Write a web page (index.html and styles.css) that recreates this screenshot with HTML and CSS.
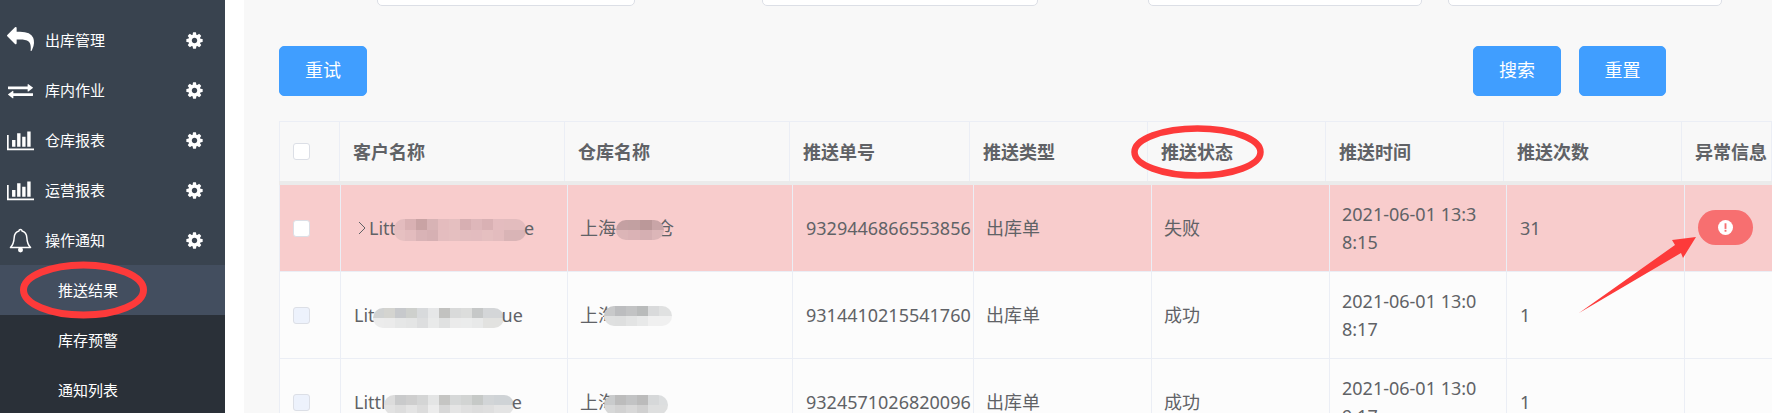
FILE: index.html
```html
<!DOCTYPE html>
<html lang="zh-CN">
<head>
<meta charset="utf-8">
<title>推送结果</title>
<link rel="stylesheet" href="styles.css">
</head>
<body>
<div class="app">
  <aside class="sidebar">
    <nav class="menu">
      <a class="item">
        <span class="ico"><svg class="i-reply" viewBox="0 0 1792 1792"><path d="M1792 1120q0 166-127 451-3 7-10.5 24t-13.5 30-13 22q-12 17-28 17-15 0-23.5-10t-8.5-25q0-9 2.5-26.5t2.5-23.5q5-68 5-123 0-101-17.5-181t-48.5-138.5-80-101-105.5-69.5-133-42.5-154-21.5-175.5-6h-224v256q0 26-19 45t-45 19-45-19l-512-512q-19-19-19-45t19-45l512-512q19-19 45-19t45 19 19 45v256h224q713 0 875 403 53 134 53 333z"/></svg></span>
        <span class="label">出库管理</span>
        <svg class="gear" viewBox="0 0 1792 1792"><use href="#cog"/></svg>
      </a>
      <a class="item">
        <span class="ico"><svg class="i-swap" viewBox="0 0 1792 1792" preserveAspectRatio="none"><path d="M1792 1184v192q0 13-9.5 22.5t-22.5 9.5h-1376v192q0 13-9.5 22.5t-22.5 9.5q-12 0-24-10l-319-320q-9-9-9-22 0-14 9-23l320-320q9-9 23-9 13 0 22.5 9.5t9.5 22.5v192h1376q13 0 22.5 9.5t9.5 22.5zm0-544q0 14-9 23l-320 320q-9 9-23 9-13 0-22.5-9.5t-9.5-22.5v-192h-1376q-13 0-22.5-9.5t-9.5-22.5v-192q0-13 9.5-22.5t22.5-9.5h1376v-192q0-14 9-23t23-9q12 0 24 10l319 319q9 9 9 23z"/></svg></span>
        <span class="label">库内作业</span>
        <svg class="gear" viewBox="0 0 1792 1792"><use href="#cog"/></svg>
      </a>
      <a class="item">
        <span class="ico"><svg class="i-bars" viewBox="0 0 2048 1792"><use href="#bars"/></svg></span>
        <span class="label">仓库报表</span>
        <svg class="gear" viewBox="0 0 1792 1792"><use href="#cog"/></svg>
      </a>
      <a class="item">
        <span class="ico"><svg class="i-bars" viewBox="0 0 2048 1792"><use href="#bars"/></svg></span>
        <span class="label">运营报表</span>
        <svg class="gear" viewBox="0 0 1792 1792"><use href="#cog"/></svg>
      </a>
      <a class="item">
        <span class="ico"><svg class="i-bell" viewBox="0 0 24 26"><path class="bell-line" d="M12 1.5c-1 0-1.6.7-1.6 1.6C7 4 5.6 6.8 5.4 10c-.2 4-.6 7-3.900 10.400h21C19.200 17 18.800 14 18.600 10c-.2-3.200-1.600-6-5-6.900 0-.9-.6-1.600-1.600-1.600z"/><circle class="bell-dot" cx="12" cy="23" r="2.600"/></svg></span>
        <span class="label">操作通知</span>
        <svg class="gear" viewBox="0 0 1792 1792"><use href="#cog"/></svg>
      </a>
      <div class="sub">
        <a class="sub-item active">推送结果</a>
        <a class="sub-item">库存预警</a>
        <a class="sub-item">通知列表</a>
      </div>
    </nav>
  </aside>

  <main class="content">
    <div class="filters">
      <div class="field f1"></div>
      <div class="field f2"></div>
      <div class="field f3"></div>
      <div class="field f4"></div>
    </div>

    <div class="toolbar">
      <button class="btn btn-retry">重试</button>
      <div class="toolbar-right">
        <button class="btn btn-search">搜索</button>
        <button class="btn btn-reset">重置</button>
      </div>
    </div>

    <div class="table">
      <div class="thead">
        <div class="cell"><span class="check"></span></div>
        <div class="cell">客户名称</div>
        <div class="cell">仓库名称</div>
        <div class="cell">推送单号</div>
        <div class="cell">推送类型</div>
        <div class="cell">推送状态</div>
        <div class="cell">推送时间</div>
        <div class="cell">推送次数</div>
        <div class="cell">异常信息</div>
      </div>
      <div class="band"></div>

      <div class="row row-fail">
        <div class="cell"><span class="check"></span></div>
        <div class="cell">
          <svg class="chevron" viewBox="0 0 8 14"><path d="M1 1l6 6-6 6"/></svg>
          <span class="nowrap">Litt<span class="mosaic m1"></span>e</span>
        </div>
        <div class="cell cell-cjk"><span class="nowrap">上海<span class="mosaic m2"></span>仓</span></div>
        <div class="cell"><span class="nowrap">9329446866553856</span></div>
        <div class="cell cell-cjk">出库单</div>
        <div class="cell cell-cjk">失败</div>
        <div class="cell cell-date"><span>2021-06-01 13:38:15</span></div>
        <div class="cell">31</div>
        <div class="cell">
          <button class="alert-pill">
            <svg class="alert-ico" viewBox="0 0 16 16"><circle class="alert-disc" cx="8" cy="8" r="8"/><rect class="alert-mark" x="7" y="3.500" width="2" height="6"/><rect class="alert-mark" x="7" y="10.500" width="2" height="2"/></svg>
          </button>
        </div>
      </div>

      <div class="row">
        <div class="cell"><span class="check check-off"></span></div>
        <div class="cell"><span class="nowrap">Lit<span class="mosaic m3"></span>ue</span></div>
        <div class="cell cell-cjk"><span class="nowrap">上<span class="partial">海</span><span class="mosaic m4"></span></span></div>
        <div class="cell"><span class="nowrap">9314410215541760</span></div>
        <div class="cell cell-cjk">出库单</div>
        <div class="cell cell-cjk">成功</div>
        <div class="cell cell-date"><span>2021-06-01 13:08:17</span></div>
        <div class="cell">1</div>
        <div class="cell"></div>
      </div>

      <div class="row">
        <div class="cell"><span class="check check-off"></span></div>
        <div class="cell"><span class="nowrap">Littl<span class="mosaic m5"></span>e</span></div>
        <div class="cell cell-cjk"><span class="nowrap">上<span class="partial">海</span><span class="mosaic m6"></span></span></div>
        <div class="cell"><span class="nowrap">9324571026820096</span></div>
        <div class="cell cell-cjk">出库单</div>
        <div class="cell cell-cjk">成功</div>
        <div class="cell cell-date"><span>2021-06-01 13:09:17</span></div>
        <div class="cell">1</div>
        <div class="cell"></div>
      </div>
    </div>
  </main>

  <svg class="marks" viewBox="0 0 1772 413">
    <defs>
      <path id="cog" d="M1152 896q0-106-75-181t-181-75-181 75-75 181 75 181 181 75 181-75 75-181zm512-109v222q0 12-8 23t-20 13l-185 28q-19 54-39 91 35 50 107 138 10 12 10 25t-9 23q-27 37-99 108t-94 71q-12 0-26-9l-138-108q-44 23-91 38-16 136-29 186-7 28-36 28h-222q-14 0-24.500-8.500t-11.500-21.500l-28-184q-49-16-90-37l-141 107q-10 9-25 9-14 0-25-11-126-114-165-168-7-10-7-23 0-12 8-23 15-21 51-66.500t54-70.500q-27-50-41-99l-183-27q-13-2-21-12.500t-8-23.500v-222q0-12 8-23t19-13l186-28q14-46 39-92-40-57-107-138-10-12-10-24 0-10 9-23 26-36 98.500-107.500t94.500-71.500q13 0 26 10l138 107q44-23 91-38 16-136 29-186 7-28 36-28h222q14 0 24.500 8.500t11.500 21.500l28 184q49 16 90 37l142-107q9-9 24-9 13 0 25 10 129 119 165 170 7 8 7 22 0 12-8 23-15 21-51 66.500t-54 70.500q26 50 41 98l183 28q13 2 21 12.500t8 23.500z"/>
      <path id="bars" d="M640 896v512h-256v-512h256zm384-512v1024h-256v-1024h256zm1024 1152v128h-2048v-1152h128v1024h1920zm-640-896v768h-256v-768h256zm384-384v1152h-256v-1152h256z"/>
    </defs>
    <ellipse class="ring" cx="83.500" cy="290" rx="60" ry="25"/>
    <ellipse class="ring ring-thin" cx="1197.500" cy="152" rx="63" ry="23.500"/>
    <polygon class="arrow" points="1579,313 1681,253 1683,258 1696,237 1672,240 1675,245"/>
  </svg>
</div>
</body>
</html>
```

FILE: styles.css
```css
html, body {
  margin: 0;
  height: 413px;
  overflow: hidden;
  background: #fff;
}

body {
  font-family: "Noto Sans", "Noto Sans CJK SC", sans-serif;
  color: #606266;
}

.app {
  position: relative;
  display: flex;
  height: 413px;
  overflow: hidden;
}

/* Sidebar */
.sidebar {
  flex: 0 0 225px;
  background: #39434f;
  color: #fff;
  font-size: 15px;
  overflow: hidden;
}

.menu {
  padding-top: 15px;
}

.item {
  display: flex;
  align-items: center;
  height: 50px;
  padding-left: 7px;
}

.ico {
  display: flex;
  flex: 0 0 38px;
  align-items: center;
  justify-content: flex-start;
}

.ico svg {
  fill: #fff;
}

.i-reply {
  width: 27px;
  height: 27px;
  margin-top: -1px;
}

.i-swap {
  width: 25px;
  height: 19px;
  margin-left: 1px;
}

.i-bars {
  width: 27px;
  height: 24px;
}

.i-bell {
  width: 23px;
  height: 25px;
  margin-left: 2px;
}

.ico .bell-line {
  fill: none;
  stroke: #fff;
  stroke-width: 1.5;
  stroke-linejoin: round;
}

.ico .bell-dot {
  fill: #fff;
}

.label {
  flex: 0 0 140px;
  padding-bottom: 2px;
  white-space: nowrap;
  font-family: "Noto Sans CJK SC", sans-serif;
}

.gear {
  width: 19px;
  height: 19px;
  fill: #fff;
}

.sub {
  background: #2a3038;
}

.sub-item {
  display: flex;
  align-items: center;
  box-sizing: border-box;
  height: 50px;
  padding: 0 0 2px 58px;
  font-family: "Noto Sans CJK SC", sans-serif;
}

.sub-item.active {
  background: #434e5f;
}

/* Main */
.content {
  flex: 1;
  min-width: 0;
  margin-left: 19px;
  padding-left: 35px;
  background: #f8f8f8;
  overflow: hidden;
}

.filters {
  display: flex;
  align-items: flex-end;
  height: 6px;
  overflow: hidden;
}

.field {
  flex: none;
  height: 40px;
  box-sizing: border-box;
  border: 1px solid #dcdfe6;
  border-radius: 5px;
  background: #fff;
}

.f1 { width: 258px; margin-left: 98px; }
.f2 { width: 276px; margin-left: 127px; }
.f3 { width: 274px; margin-left: 110px; }
.f4 { width: 274px; margin-left: 26px; }

.toolbar {
  display: flex;
  justify-content: space-between;
  margin: 40px 106px 25px 0;
}

.toolbar-right {
  display: flex;
  gap: 18px;
}

.btn {
  height: 50px;
  width: 88px;
  padding: 0 0 4px;
  border: 1px solid #409eff;
  border-radius: 5px;
  background: #409eff;
  color: #fff;
  font: 18px "Noto Sans CJK SC", sans-serif;
}

.btn-reset {
  width: 87px;
}

/* Table */
.table {
  width: 1493px;
  font-size: 18px;
}

.thead,
.row {
  display: grid;
  border-left: 1px solid #ebeef5;
}

.thead {
  grid-template-columns: 60px 225px 225px 180px 178px 178px 178px 178px 90px;
  height: 60px;
  box-sizing: border-box;
  border-top: 1px solid #ebeef5;
  font-weight: 700;
}

.band {
  height: 4px;
  background: #ebebeb;
}

.row {
  grid-template-columns: 61px 227px 225px 181px 178px 178px 177px 178px 88px;
  height: 87px;
  box-sizing: border-box;
  border-bottom: 1px solid #ebeef5;
  background: #fcfcfc;
}

.row-fail {
  background: #f8cccc;
}

.cell {
  display: flex;
  align-items: center;
  box-sizing: border-box;
  min-width: 0;
  padding: 0 13px;
  border-right: 1px solid #ebeef5;
  line-height: 28px;
  white-space: nowrap;
}

.cell-cjk {
  padding-left: 12px;
}

.cell-date {
  padding: 0 20px 0 12px;
  white-space: normal;
  word-break: break-all;
}

.nowrap {
  white-space: nowrap;
}

.check {
  flex: none;
  width: 17px;
  height: 17px;
  box-sizing: border-box;
  border: 1px solid #dcdfe6;
  border-radius: 3px;
  background: #fff;
}

.check-off {
  background: #edf2fc;
}

.chevron {
  flex: none;
  width: 8px;
  height: 14px;
  margin: 0 3px 0 4px;
  fill: none;
  stroke: #606266;
  stroke-width: 1;
}

.partial {
  margin-right: -12px;
}

.mosaic {
  display: inline-block;
  vertical-align: -6px;
  height: 22px;
  border-radius: 10px;
  background-repeat: no-repeat;
  background-size: 100% 50%;
  background-position: top, bottom;
}

.m1 {
  width: 132px;
  margin: 0 -2px;
  background-image:
    linear-gradient(90deg, #e3bcbe 0 11px, #d9b1b3 11px 22px, #c9a3a4 22px 33px, #d8b3b5 33px 44px, #e4bcbe 44px 55px, #e5bfc0 55px 66px, #d7afb2 66px 77px, #deb7ba 77px 88px, #d9b1b4 88px 99px, #e4bcbf 99px 110px, #e3bcbe 110px),
    linear-gradient(90deg, #e6c0c1 0 11px, #e3bcbe 11px 22px, #d9b3b6 22px 33px, #d6b0b3 33px 44px, #e4bdbf 44px 55px, #e5bfc0 55px 66px, #e3bdbf 66px 77px, #e3bcbf 77px 88px, #e5bfc0 88px 99px, #e3bcbe 99px 110px, #d9b4b6 110px);
}

.m2 {
  position: relative;
  width: 48px;
  height: 20px;
  margin-right: -8px;
  vertical-align: -5px;
  background-image:
    linear-gradient(90deg, #c4a0a2 0 12px, #c2a0a1 12px 24px, #bb9899 24px 36px, #c9a5a7 36px),
    linear-gradient(90deg, #dcb5b7 0 12px, #dab2b5 12px 24px, #d5afb2 24px 36px, #dcb6b8 36px);
}

.m3 {
  width: 131px;
  height: 20px;
  margin: 0 -2px;
  vertical-align: -6px;
  background-image:
    linear-gradient(90deg, #d0d2d2 0 11px, #d4d4d0 11px 22px, #c7c9cc 22px 33px, #ced0cd 33px 44px, #d8dadc 44px 55px, #e6e7e8 55px 66px, #c2c2c0 66px 77px, #d9dada 77px 88px, #dcdddc 88px 99px, #c6c8c8 99px 110px, #d4d6d8 110px),
    linear-gradient(90deg, #ececec 0 11px, #ebebeb 11px 22px, #e6e7e7 22px 33px, #e4e5e5 33px 44px, #dddedf 44px 55px, #e9eaea 55px 66px, #e0e1e1 66px 77px, #ebebeb 77px 88px, #ebecec 88px 99px, #e8e9e9 99px 110px, #e2e2e0 110px);
}

.m4 {
  width: 68px;
  height: 20px;
  vertical-align: -4px;
  background-image:
    linear-gradient(90deg, #c8c9ca 0 11px, #bcbdbf 11px 22px, #c2c3c4 22px 33px, #b9bbbb 33px 44px, #d9dadb 44px 55px, #e0e1e1 55px),
    linear-gradient(90deg, #dfe0e0 0 11px, #dedfdf 11px 22px, #e3e4e4 22px 33px, #e8e9e9 33px 44px, #f0f0f0 44px);
}

.m5 {
  width: 130px;
  height: 20px;
  margin: 0 -2px;
  vertical-align: -6px;
  background-image:
    linear-gradient(90deg, #dcdcdc 0 11px, #c9cacb 11px 22px, #cecece 22px 33px, #d4d5d5 33px 44px, #e4e5e5 44px 55px, #c5c5c3 55px 66px, #d6d8d8 66px 77px, #d2d4d3 77px 88px, #c6c9c7 88px 99px, #d2d5d7 99px 110px, #cfd3d6 110px),
    linear-gradient(90deg, #e2e2e2 0 11px, #dddddd 11px 22px, #e4e4e4 22px 33px, #dcdcdc 33px 44px, #ececec 44px 55px, #d8d8d8 55px 66px, #e5e5e5 66px 77px, #e0e0e0 77px 88px, #dddddd 88px 99px, #dfdfdf 99px 110px, #e4e4e4 110px);
}

.m6 {
  width: 64px;
  height: 20px;
  vertical-align: -6px;
  background-image:
    linear-gradient(90deg, #c9cbcc 0 11px, #bcbcbc 11px 22px, #c2c3c4 22px 33px, #bbbbbb 33px 44px, #d6d8d9 44px 55px, #dcdedf 55px),
    linear-gradient(90deg, #d7d8d8 0 11px, #d2d2d2 11px 22px, #d8d8d8 22px 33px, #d0d0d0 33px 44px, #dedfdf 44px);
}

.alert-pill {
  display: flex;
  align-items: center;
  justify-content: center;
  flex: none;
  width: 55px;
  height: 35px;
  margin-top: -1px;
  padding: 0;
  border: 0;
  border-radius: 18px;
  background: #f76f70;
}

.alert-ico {
  width: 15px;
  height: 15px;
}

.alert-disc {
  fill: #fff;
}

.alert-mark {
  fill: #f76f70;
}

/* Hand-drawn annotations on top of the screenshot */
.marks {
  position: absolute;
  left: 0;
  top: 0;
  width: 1772px;
  height: 413px;
  pointer-events: none;
}

.ring {
  fill: none;
  stroke: #fd3a3a;
  stroke-width: 7;
}

.ring-thin {
  stroke-width: 6.5;
}

.arrow {
  fill: #fd3a3a;
}
```
